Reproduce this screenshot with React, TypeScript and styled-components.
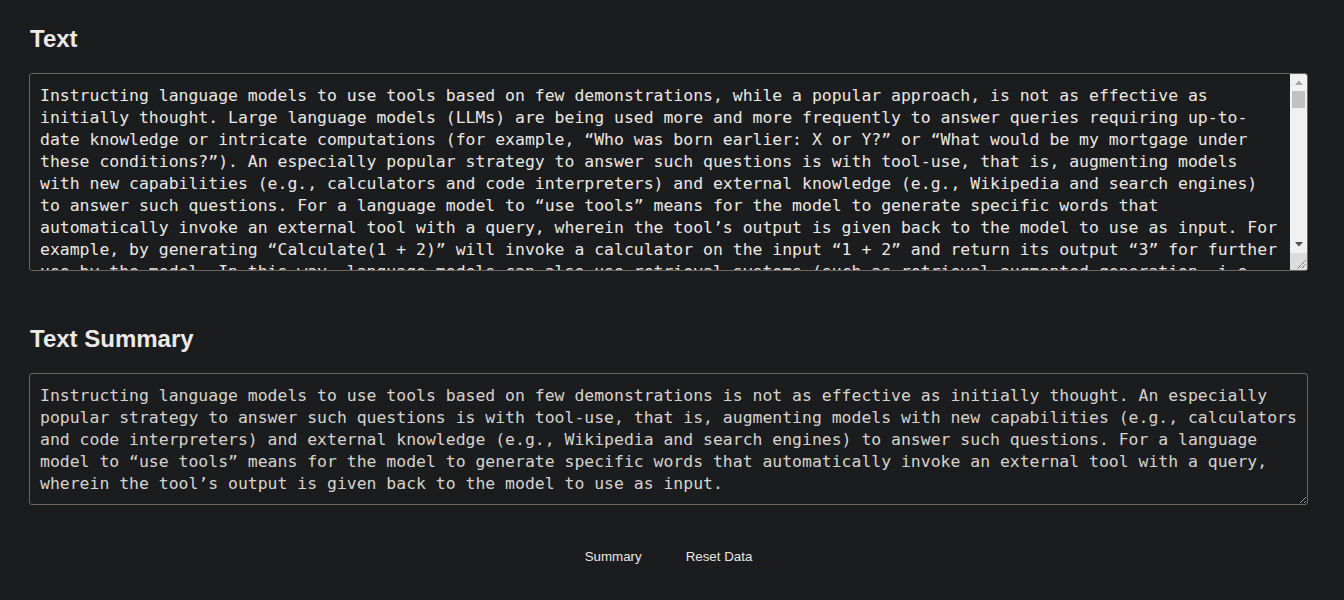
import React, { useState } from 'react';
import styled, { createGlobalStyle } from 'styled-components';

const GlobalStyle = createGlobalStyle`
  html, body {
    margin: 0;
    padding: 0;
    background: #1b1c1e;
  }
  body {
    font-family: 'Liberation Sans', Arial, sans-serif;
    color: #e8e6e3;
  }
`;

const SOURCE_TEXT = [
  'Instructing language models to use tools based on few demonstrations, while a popular approach, is not as effective as initially thought. Large language models (LLMs) are being used more and more frequently to answer queries requiring up-to-date knowledge or intricate computations (for example, “Who was born earlier: X or Y?” or “What would be my mortgage under these conditions?”). An especially popular strategy to answer such questions is with tool-use, that is, augmenting models with new capabilities (e.g., calculators and code interpreters) and external knowledge (e.g., Wikipedia and search engines) to answer such questions. For a language model to “use tools” means for the model to generate specific words that automatically invoke an external tool with a query, wherein the tool’s output is given back to the model to use as input. For example, by generating “Calculate(1 + 2)” will invoke a calculator on the input “1 + 2” and return its output “3” for further use by the model. In this way, language models can also use retrieval systems (such as retrieval augmented generation, i.e., RAG) to look up documents that are relevant to the question before answering it.',
  'While tool-use makes it possible for models to answer these queries, it is not obvious how to teach a model when and how to call a tool. The most common approach is to write a handful of demonstrations in the prompt, showing the model examples of questions, the corresponding tool calls and the final answers. Many papers report impressive results with this approach, but most of them evaluate on benchmarks that were designed with tool-use in mind, where it is clear from the question which tool should be used. In a more realistic setting, the model has to decide by itself whether a tool is needed at all, and which of the available tools is the most helpful for the question at hand.',
  'To study this question, we evaluated a range of models and prompting strategies on a broad set of tasks, comparing few-shot tool-use against strong baselines that do not use any tools. Surprisingly, we found that in many cases the tool-using models did not outperform the baselines, and sometimes they were even worse. When we looked at the outputs, we found that models often called tools when they were not needed, passed malformed inputs to the tools, or ignored the tool outputs altogether and produced an answer from their own parametric knowledge instead.',
  'We also found that the results depend heavily on the choice of demonstrations and on the format in which the tool outputs are returned to the model. Small changes to the prompt, such as reordering the examples or renaming a tool, led to large differences in accuracy. This suggests that few-shot tool-use is brittle, and that reported gains may not transfer to new tasks or new models. Refining the tool outputs, for example by letting the model check whether a retrieved document actually answers the question, helped in some cases, but it also added considerable cost in terms of the number of tokens that have to be generated.',
  'Taken together, our findings show that instructing language models to use tools based on few demonstrations is not as effective as initially thought. We hope that our analysis encourages more careful evaluation of tool-augmented models, including comparisons against strong no-tool baselines, reports of the computational cost of each method, and experiments on tasks where the need for a tool is not given away by the question itself. We release our code and prompts so that others can reproduce and extend our experiments.',
].join('\n\n');

const SUMMARY_TEXT =
  'Instructing language models to use tools based on few demonstrations is not as effective as initially thought. An especially popular strategy to answer such questions is with tool-use, that is, augmenting models with new capabilities (e.g., calculators and code interpreters) and external knowledge (e.g., Wikipedia and search engines) to answer such questions. For a language model to “use tools” means for the model to generate specific words that automatically invoke an external tool with a query, wherein the tool’s output is given back to the model to use as input.';

const SCROLLBAR = 17;

const Page = styled.main`
  padding: 5px 36px 40px 29px;
`;

const Section = styled.section<{ $gap?: number }>`
  margin-bottom: ${({ $gap }) => $gap ?? 0}px;
`;

const Heading = styled.h2`
  margin: 20px 0 20px 1px;
  font-size: 24px;
  font-weight: 700;
  color: #ece9e6;
`;

const Field = styled.div`
  position: relative;
`;

const TextBox = styled.textarea<{ $height: number; $dim?: boolean; $scroll?: boolean }>`
  display: block;
  box-sizing: border-box;
  width: 100%;
  height: ${({ $height }) => $height}px;
  margin: 0;
  padding: 11px ${({ $scroll }) => ($scroll ? 8 + SCROLLBAR : 8)}px 9px 10px;
  background: #1b1c1e;
  color: ${({ $dim }) => ($dim ? '#d6d3ce' : '#ebe8e4')};
  border: 1px solid #6a655e;
  border-radius: 3px;
  font-family: 'DejaVu Sans Mono', 'Liberation Mono', monospace;
  font-size: 16.44px;
  line-height: 22px;
  outline: none;
  scrollbar-width: none;

  &::-webkit-scrollbar {
    display: none;
  }
`;

// classic light scrollbar drawn over the right edge of the textarea
const ScrollBar = styled.div`
  position: absolute;
  top: 1px;
  right: 1px;
  bottom: 1px;
  width: ${SCROLLBAR}px;
  display: flex;
  flex-direction: column;
  background: #f1f1f1;
  border-top-right-radius: 2px;
  pointer-events: none;
`;

const ArrowButton = styled.div`
  height: ${SCROLLBAR}px;
  flex: none;
  display: flex;
  align-items: center;
  justify-content: center;
`;

const Track = styled.div`
  flex: 1;
  padding: 0 2px;
  overflow: hidden;
`;

const Thumb = styled.div`
  height: 17px;
  background: #c1c1c1;
`;

const Corner = styled.div`
  height: ${SCROLLBAR}px;
  flex: none;
  background: #dcdcdc;
  display: flex;
  align-items: flex-end;
  justify-content: flex-end;
`;

const Actions = styled.div`
  display: flex;
  justify-content: center;
  gap: 12px;
  margin-top: 36px;
`;

const ActionButton = styled.button`
  background: transparent;
  border: none;
  padding: 8px 16px;
  color: #e8e6e3;
  font-family: 'Liberation Sans', Arial, sans-serif;
  font-size: 13.33px;
  cursor: pointer;
`;

function Arrow({ dir, color }: { dir: 'up' | 'down'; color: string }) {
  return (
    <svg width="8" height="5" viewBox="0 0 8 5">
      <path d={dir === 'up' ? 'M0 5 L4 0.5 L8 5 Z' : 'M0 0 L8 0 L4 4.5 Z'} fill={color} />
    </svg>
  );
}

function Grip() {
  return (
    <svg width="14" height="14" viewBox="0 0 14 14">
      <path d="M12.5 4.5 L4.5 12.5 M12.5 8.5 L8.5 12.5" stroke="#2a2a2a" strokeWidth="1" strokeDasharray="1 1" />
    </svg>
  );
}

function ScrollArea({ value, onChange }: { value: string; onChange: (v: string) => void }) {
  const [offset, setOffset] = useState(0);
  const trackHeight = 198 - 2 - SCROLLBAR * 3;

  return (
    <Field>
      <TextBox
        $height={198}
        $scroll
        value={value}
        onChange={(e) => onChange(e.target.value)}
        onScroll={(e) => {
          const el = e.currentTarget;
          const max = el.scrollHeight - el.clientHeight;
          setOffset(max > 0 ? (el.scrollTop / max) * (trackHeight - 17) : 0);
        }}
      />
      <ScrollBar>
        <ArrowButton>
          <Arrow dir="up" color="#a3a3a3" />
        </ArrowButton>
        <Track>
          <Thumb style={{ transform: `translateY(${offset}px)` }} />
        </Track>
        <ArrowButton>
          <Arrow dir="down" color="#505050" />
        </ArrowButton>
        <Corner>
          <Grip />
        </Corner>
      </ScrollBar>
    </Field>
  );
}

export default function App() {
  const [text, setText] = useState(SOURCE_TEXT);
  const [summary, setSummary] = useState(SUMMARY_TEXT);

  return (
    <Page>
      <GlobalStyle />
      <Section $gap={54}>
        <Heading>Text</Heading>
        <ScrollArea value={text} onChange={setText} />
      </Section>
      <Section>
        <Heading>Text Summary</Heading>
        <TextBox $height={132} $dim value={summary} onChange={(e) => setSummary(e.target.value)} />
      </Section>
      <Actions>
        <ActionButton onClick={() => setSummary(SUMMARY_TEXT)}>Summary</ActionButton>
        <ActionButton
          onClick={() => {
            setText('');
            setSummary('');
          }}
        >
          Reset Data
        </ActionButton>
      </Actions>
    </Page>
  );
}
